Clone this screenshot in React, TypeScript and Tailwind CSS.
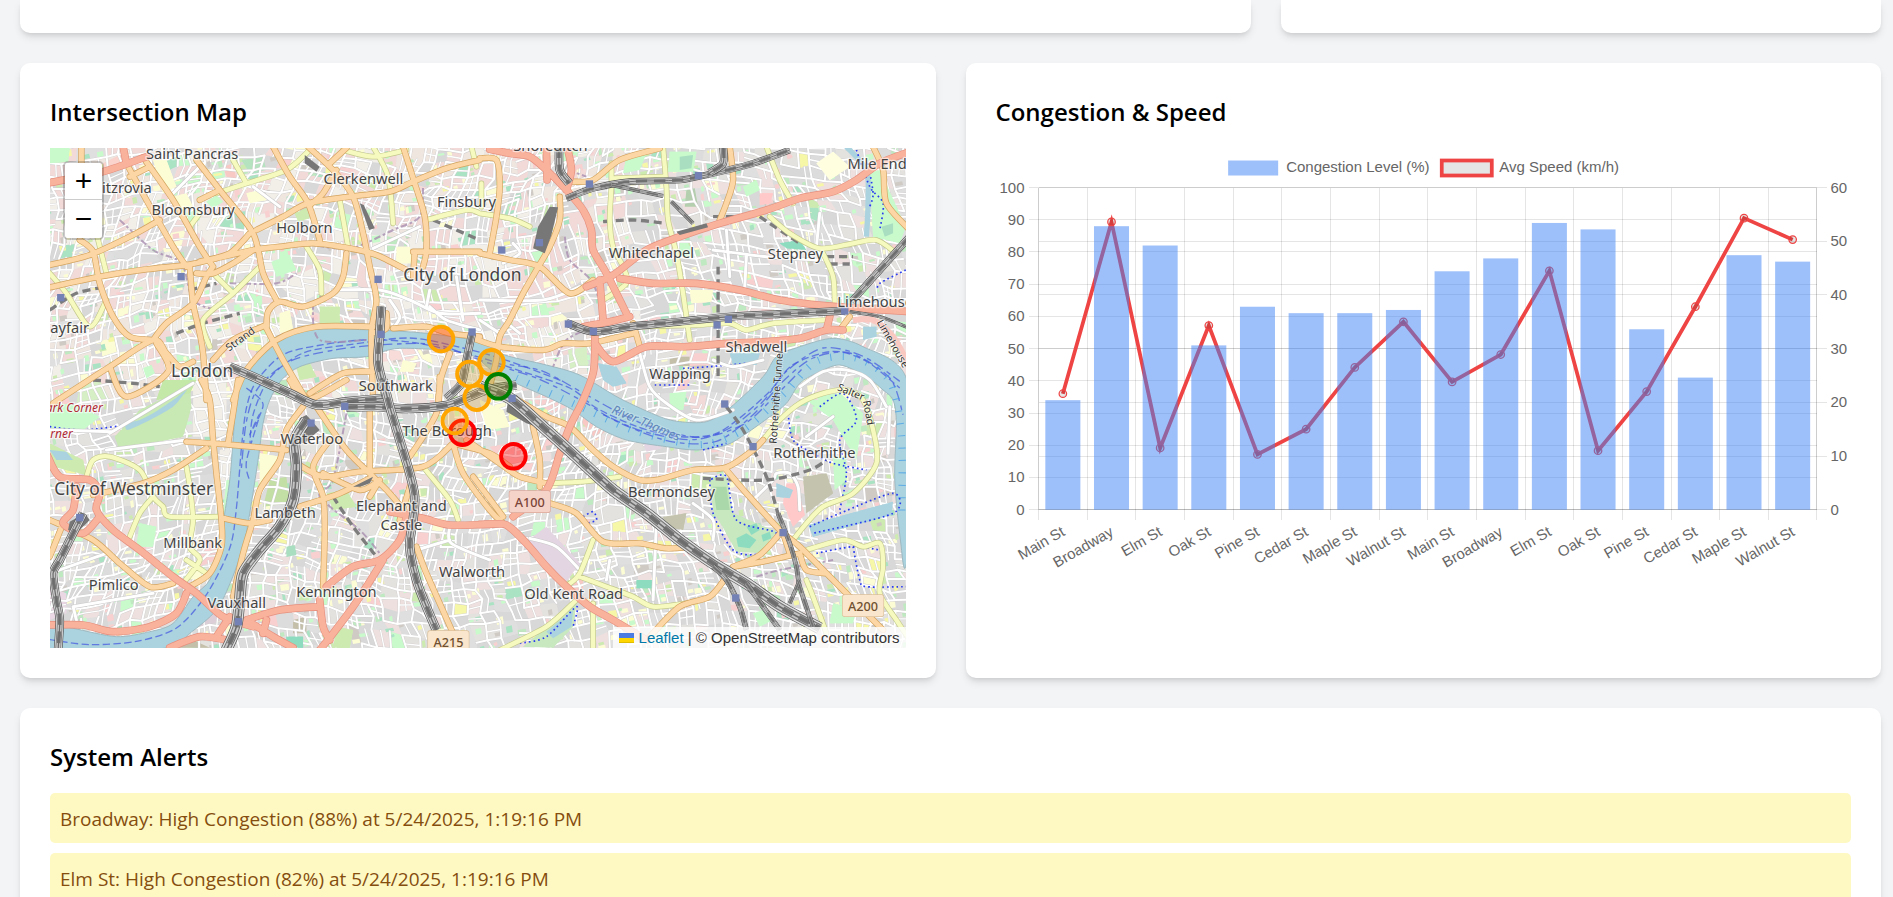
import { ReactNode } from "react";

/* ---------- Map geometry ---------- */

type Tile = 0 | 1 | 2 | 3;
type Line = [Tile, string, number?];

// Origin of each map sector inside the 2568 x 1500 drawing.
const ORIGIN: [number, number][] = [
  [-150, -444],
  [1290, -84],
  [-30, 696],
  [1290, 696],
];

const toPoints = (s: string) => s.split(" ").map((p) => p.split(",").map(Number));

const smooth = (s: string, tile?: Tile, closed = false) => {
  const [ox, oy] = tile === undefined ? [0, 0] : ORIGIN[tile];
  const p = toPoints(s).map(([x, y]) => [x + ox, y + oy]);
  const n = p.length;
  const at = (i: number) => (closed ? p[(i + n) % n] : p[Math.max(0, Math.min(n - 1, i))]);
  let d = `M${p[0][0]},${p[0][1]}`;
  for (let i = 0; i < (closed ? n : n - 1); i++) {
    const [a, b, c, e] = [at(i - 1), at(i), at(i + 1), at(i + 2)];
    const f = (v: number) => Math.round(v * 10) / 10;
    d += `C${f(b[0] + (c[0] - a[0]) / 7)},${f(b[1] + (c[1] - a[1]) / 7)} ${f(c[0] - (e[0] - b[0]) / 7)},${f(c[1] - (e[1] - b[1]) / 7)} ${c[0]},${c[1]}`;
  }
  return closed ? d + "Z" : d;
};

const polygon = (s: string, t: Tile) =>
  `M${toPoints(s).map(([x, y]) => `${x + ORIGIN[t][0]},${y + ORIGIN[t][1]}`).join("L")}Z`;

const RIVER =
  "0,1431 70,1441 200,1466 300,1451 370,1426 430,1346 480,1296 510,1196 520,1126 540,996 550,876 560,756 585,686 620,636 680,566 800,544 970,546 1130,556 1290,581 1365,621 1490,651 1590,681 1710,751 1830,806 1890,821 1970,821 2040,780 2140,686 2180,626 2250,596 2350,571 2440,596 2568,686 2600,1000 2568,1256 2552,1176 2535,996 2540,826 2530,756 2500,726 2450,686 2370,651 2300,676 2250,706 2210,766 2160,806 2090,856 2030,891 1940,906 1850,896 1730,876 1640,836 1570,786 1490,746 1410,711 1330,670 1250,616 1050,601 950,626 850,631 750,656 695,696 660,756 640,826 625,936 595,1126 580,1196 545,1296 500,1386 420,1456 350,1500 0,1510";

const FERRIES = [
  "0,1475 120,1490 260,1480 380,1440 470,1340 540,1200 560,1080 575,900 590,780 620,700 700,620 820,590 960,575 1100,585 1280,625 1400,665 1560,720 1640,780 1760,835 1880,865 1990,860 2070,810 2160,730 2230,650 2350,610 2450,640 2550,720",
  "575,960 590,820 625,720 720,640 860,605 1000,590 1160,590 1300,640 1460,690 1600,760 1700,820 1860,880 2000,880 2110,800 2200,700 2290,630 2400,615 2520,690 2560,800",
  "600,900 610,800 660,690 760,615 900,590 1080,570 1240,600 1380,640 1540,700",
  "1660,800 1780,850 1930,875 2040,840 2140,760 2210,670 2320,600 2440,625 2550,700",
  "590,720 640,770 600,860 630,800 590,940 600,1000",
  "1380,650 1480,670 1600,735 1700,790 1800,835 1950,868 2080,830 2170,750 2260,660",
];

const RED: Line[] = [
  [0, "150,548 310,515 440,470"], [0, "370,440 380,490"],
  [1, "30,88 90,100 150,110 200,150 260,210 310,270 335,330 340,390 380,460 445,590"],
  [1, "200,80 202,180"], [1, "262,80 275,150 260,210"],
  [1, "320,500 400,465 500,390 600,350 720,310 860,270 960,235 1060,215 1130,180 1200,130 1290,95"],
  [1, "420,475 520,490 650,490 780,510 900,540 1070,560 1290,575"],
  [1, "310,620 390,605 450,590"], [1, "360,480 370,600"],
  [1, "345,620 345,700 340,760 310,840 270,920 240,1000 200,1110 100,1190"],
  [1, "345,670 400,725 500,680 620,680 740,670 860,665 960,655 1040,630 1090,630"], [1, "1050,590 1040,630"],
  [2, "20,220 60,290 150,300 180,340 170,390 220,450 300,510 400,590 470,640 550,710 640,740"],
  [2, "110,320 100,390 70,430 130,460 180,410"],
  [2, "20,735 130,735 220,755 330,740 410,700 440,640"],
  [2, "620,720 720,690 840,680"], [2, "390,803 480,770 560,780"], [2, "570,710 530,770"],
  [2, "840,660 850,740 870,780"], [2, "860,620 940,560 1020,540 1080,480 1100,410"],
  [2, "1030,540 980,620 940,680 880,760 840,810"], [2, "1050,395 1150,415 1230,435 1350,433 1400,435 1460,490"],
  [2, "620,720 700,770 760,803"], [2, "680,720 670,760"],
  [3, "0,433 80,435 140,490 200,560 260,620 330,680 400,720 500,780"],
];

const ORANGE: Line[] = [
  [0, "245,440 245,490"], [0, "150,795 270,765 400,705 480,660"],
  [0, "150,862 300,830 440,808 560,795 650,775 760,750 840,740 940,730 1050,745 1130,765 1220,810"],
  [0, "430,472 520,600 600,740 640,800"], [0, "380,490 440,600 520,740 560,800"],
  [0, "590,480 660,570 760,700 790,820 830,900"], [0, "820,440 870,530 925,610 960,720"],
  [0, "770,690 850,650 925,610 1050,590 1170,575 1240,545 1340,505 1440,480"],
  [0, "925,440 1000,510 1060,590 1090,700 1110,800 1130,900 1115,1000 1120,1200"],
  [0, "1210,440 1245,550 1275,650 1280,750 1270,800"], [0, "1240,755 1440,755"], [0, "1245,755 1240,830"],
  [0, "1040,760 1030,830 1000,880 910,920 840,905 805,935 800,985"],
  [0, "240,720 280,755 300,850 340,950 390,1010 460,1020"],
  [0, "460,1020 500,970 580,910 620,830 640,800"],
  [0, "570,800 580,910 600,1000 610,1060 620,1200"], [0, "640,1080 700,1020 800,975"],
  [0, "160,1210 330,1100 460,1020 500,1060 540,1100 580,1085"],
  [0, "470,1030 505,1115 380,1190 330,1100"],
  [0, "700,1200 740,1110 830,1020 950,980 1120,980"], [0, "1115,1000 1160,985 1160,940"],
  [0, "1180,985 1280,980 1350,1000 1440,1010"],
  [0, "800,985 850,1080 920,1200"], [0, "930,1180 1030,1120 1120,1115"], [0, "1350,1060 1325,1130 1315,1200"],
  [0, "750,700 690,760 600,785"], [0, "760,750 700,790 640,820 590,820"], [0, "660,570 600,600"],
  [0, "990,490 1040,444"], [0, "450,500 390,530"], [0, "1010,510 970,580 930,615"],
  [1, "0,115 50,120 60,200 50,290 30,400"], [1, "0,400 90,420 180,440 270,520 340,480"],
  [1, "240,230 240,300 210,380 170,450 130,520 90,600 60,650 50,720 30,800"],
  [1, "280,185 340,180 420,120 540,85"], [1, "750,80 760,180 740,250 720,300"],
  [1, "1180,80 1210,150 1220,250 1290,330"], [1, "-20,655 60,680 190,690 250,670 330,670 460,640"],
  [1, "460,610 480,680"], [1, "1110,590 1080,630"],
  [2, "485,0 510,60 520,180 530,280 545,420 545,500 510,580 450,620"], [2, "595,0 580,100 565,190"],
  [2, "440,185 580,195 740,210"], [2, "790,80 740,150 720,240 660,330 640,420 610,520 580,650"],
  [2, "550,415 630,430 690,420"], [2, "160,345 310,310 400,270 500,205"], [2, "750,0 800,60 920,0"],
  [2, "830,80 920,210 1000,290 1050,340 1100,400"], [2, "870,180 820,260 850,350 855,450 850,620"],
  [2, "770,250 850,290 960,275 1150,260 1240,190"], [2, "780,380 900,340 1000,290"], [2, "990,90 990,280"],
  [2, "1110,320 1080,420"], [2, "1020,300 990,350"], [2, "1200,-10 1190,100 1110,230"],
  [2, "1240,190 1270,280 1350,390 1390,430"], [2, "1240,190 1350,220 1410,260"],
  [2, "1130,500 1160,580 1240,760"], [2, "30,420 160,480 240,550 330,620 400,610"], [2, "30,530 70,430"],
  [2, "850,280 960,330 1020,300"],
  [3, "60,30 130,70 200,110 270,140 340,210 400,260 480,300 540,298 640,270 740,262 820,210 850,180"],
  [3, "160,140 180,240 180,320"], [3, "-40,180 60,250 120,290 200,310"], [3, "-20,290 70,410"],
  [3, "210,370 290,400 370,485 480,490 560,505 640,500"],
  [3, "740,270 800,340 900,450 960,500 1040,580 1110,650 1210,750"],
  [3, "910,450 840,525 760,560"], [3, "760,560 850,545 960,520"], [3, "740,590 690,650 600,680 510,770"],
  [3, "910,460 930,520"], [3, "960,520 980,570 1040,580"],
];

const YELLOW: Line[] = [
  [0, "650,580 740,550 860,510 930,450"], [0, "700,480 740,550"], [0, "290,700 320,820"],
  [0, "150,820 200,880 270,980 320,900"], [0, "780,800 700,880 610,960 630,1040"], [0, "640,820 700,880"],
  [0, "1020,600 1045,740"], [0, "1120,440 1165,530 1180,670"], [0, "1030,450 1120,470 1220,450"],
  [0, "1280,660 1400,630 1440,640"], [0, "920,740 960,810 965,880"], [0, "1415,440 1430,500"],
  [0, "600,640 570,680"],
  [1, "395,130 395,200 390,300 400,380 430,440 440,490 370,540"], [1, "400,175 550,170"],
  [1, "550,80 560,200 565,300 590,400 610,520 630,660"], [1, "0,280 90,295 150,320"], [1, "5,190 5,260"],
  [1, "860,80 900,180 940,250"], [1, "870,290 930,340 1020,385 1120,370 1190,360 1250,400"],
  [1, "1030,400 1060,470 1065,550"], [1, "470,620 650,615 750,610 800,630 880,610 1040,600"],
  [2, "140,290 160,240 210,230 300,270 340,350 370,380 390,410 540,410"], [2, "340,350 300,400 270,470"],
  [2, "440,260 450,320 460,420 450,500 480,540 430,610"], [2, "1150,260 1230,360 1255,420"], [2, "440,540 500,580"],
  [3, "200,310 310,305 420,290"], [3, "340,480 300,580 265,615"],
  [3, "300,590 380,620 460,650 520,680 620,670"], [3, "60,810 200,740 290,660"], [3, "340,670 340,810"],
  [3, "850,180 900,120 960,70 1030,40 1100,30 1150,60 1180,150 1190,250 1120,340 1030,380 980,430 940,480"],
  [3, "980,510 1090,480 1150,500 1200,490 1210,560 1200,640 1250,720 1290,780"],
  [3, "980,600 1000,650 1040,760"],
];

const WHITE: Line[] = [
  [2, "200,210 440,180"], [2, "210,160 460,10"], [2, "30,150 215,155"], [2, "30,580 200,520"], [2, "100,680 340,640"],
  [2, "100,680 110,720"], [0, "1000,870 1140,870 1230,900 1320,940 1440,940"], [0, "1290,870 1280,920"],
  [0, "1260,680 1120,745"], [0, "600,500 520,580"], [1, "0,540 190,540 300,500"], [1, "70,600 120,640"],
  [1, "700,390 860,410 1020,420"], [1, "740,330 750,470"], [1, "800,410 795,500"],
  [1, "480,700 510,800 560,850 650,900 760,870"], [1, "700,720 760,740 850,720"],
  [1, "960,800 1030,755 1100,750 1170,780 1220,860"], [1, "1020,280 1010,380"],
  [3, "820,360 880,300 890,280 930,280 955,320 960,390"], [3, "1230,80 1225,220"], [3, "150,475 230,500 300,570"],
  [3, "640,370 700,420 700,480"], [3, "530,430 520,660"], [3, "390,540 380,600"], [2, "1230,440 1235,490 1350,540"],
  [2, "1130,510 1230,480"], [3, "980,170 1060,110"],
  [0, "1290,920 1340,960 1440,990"], [0, "1370,830 1390,960"], [0, "1170,900 1200,950 1180,985"],
  [1, "100,370 120,400 70,430"], [1, "0,600 60,640"], [0, "840,620 760,560"],
];

const RAIL: Line[] = [
  [0, "690,1100 760,1130 870,1180 950,1215 1040,1205 1150,1195", 28],
  [0, "1145,920 1140,1000 1135,1090 1160,1190", 28],
  [0, "1417,1000 1400,1080 1385,1150 1340,1195", 24],
  [1, "238,80 240,150 268,190", 26],
  [1, "260,235 340,205 450,185 600,180 700,160 820,130 930,90", 20],
  [1, "730,80 730,130 690,158", 24], [1, "395,195 550,228", 12], [1, "575,245 640,310", 12],
  [1, "260,608 340,635 450,620 600,605 750,590 900,582 1095,572", 24],
  [1, "1290,350 1200,450 1115,545", 22], [1, "1110,575 1200,590 1290,625", 10],
  [2, "920,82 1000,80 1100,86 1220,76 1290,50 1340,30 1430,15", 28],
  [2, "1030,0 1050,80 1080,180 1110,280 1125,350 1120,420 1110,500 1130,600 1160,680 1190,750", 28],
  [2, "800,120 765,180 770,260 760,360 720,440 660,510 610,580 600,660 590,740 560,810", 34],
  [2, "130,400 100,460 60,540 40,580 50,660 60,720 55,810", 26],
  [3, "0,20 90,55 200,150 300,240 400,330 500,400 600,480 700,550 800,610 900,680 1020,745", 36],
  [3, "700,560 740,600 780,680 800,750", 16], [3, "800,610 850,680 900,750", 16],
  [3, "895,400 930,490 950,560 960,620 1000,740", 14], [3, "960,600 930,670", 12],
];

const TUNNELS: Line[] = [
  [1, "370,305 460,300 560,310"], [1, "700,290 770,290"], [1, "715,440 715,780"], [1, "840,290 960,370"],
  [1, "1040,410 1120,410"], [1, "1050,432 1110,432"], [3, "740,80 790,150 860,290 900,420"],
  [3, "670,295 860,300 990,270 1040,240"], [2, "880,350 940,440 1010,530"], [0, "150,930 230,880 320,860"],
  [0, "530,1000 610,970 720,940"], [0, "1300,660 1440,720"], [0, "280,1140 400,1150 480,1160"], [0, "570,870 650,850"],
];

const STATIONS: [Tile, number, number][] = [
  [0, 544, 830], [0, 183, 893], [0, 1135, 838], [0, 1144, 1003], [0, 1417, 996],
  [1, 329, 192], [1, 656, 167], [1, 179, 368], [1, 66, 390], [1, 266, 612], [1, 341, 634], [1, 712, 615],
  [1, 746, 598], [1, 1095, 573], [1, 735, 852], [2, 120, 413], [2, 814, 129], [2, 915, 79], [2, 596, 725],
  [3, 97, 55], [3, 820, 200], [3, 910, 458], [3, 768, 654],
];

const AREAS: [Tile, string, string][] = [
  [0, "#c8facc", "150,444 210,444 205,485 150,490"], [0, "#f9d3cc", "310,490 370,460 365,500 310,525"],
  [0, "#fdfdd5", "460,480 500,480 530,560 490,580"], [0, "#c8facc", "620,605 650,585 670,605 640,625"],
  [0, "#f2efe9", "590,690 630,660 665,690 625,730"], [0, "#b5e3c0", "725,480 790,470 800,510 750,520"],
  [0, "#c8facc", "815,785 870,765 890,810 830,830"], [0, "#cdebb0", "885,640 920,625 930,655 895,665"],
  [0, "#f2efe9", "830,850 950,800 980,870 900,910"], [0, "#cdebb0", "960,920 1020,920 1020,970 960,970"],
  [0, "#c8facc", "430,1105 455,1095 465,1120 440,1135"], [0, "#dddddd", "340,760 430,715 480,780 360,810"],
  [0, "#d6efc4", "240,1160 300,1140 330,1200 230,1210"], [0, "#cdebb0", "890,1100 930,1090 950,1130 900,1140"],
  [0, "#fdfdd5", "1190,740 1230,740 1240,790 1190,790"], [0, "#f8dcda", "1150,1040 1260,1045 1240,1075 1110,1090"],
  [0, "#fdfdd5", "1210,1080 1250,1090 1240,1115 1200,1115"], [0, "#f7c8c4", "670,500 700,490 710,540 685,540"],
  [0, "#fdfdd5", "840,940 870,930 880,990 840,1000"], [0, "#c8facc", "560,640 590,630 600,660 570,670"],
  [0, "#fdfdd5", "520,590 560,580 580,620 540,630"], [0, "#fdfdd5", "740,580 780,570 800,600 750,610"],
  [1, "#c8facc", "570,95 650,95 640,155 565,155"], [1, "#a9dfc0", "600,110 640,105 635,145 600,150"],
  [1, "#ffffe0", "1010,130 1060,95 1110,140 1050,180"], [1, "#b3cfae", "620,210 645,205 655,260 615,260"],
  [1, "#ffc9c9", "840,220 880,220 870,250 840,255"], [1, "#c8facc", "1170,160 1200,150 1278,320 1260,370 1180,350"],
  [1, "#a9dfc0", "1205,320 1240,310 1240,340 1215,350"], [1, "#fdfdd5", "630,510 700,510 695,545 635,550"],
  [1, "#d6efc4", "265,690 320,680 325,740 270,745"], [1, "#c4bfa8", "570,710 630,710 630,738 570,738"],
  [1, "#f7d0cf", "630,700 690,700 690,735 630,738"], [1, "#aad3df", "750,700 840,700 830,735 760,735"],
  [1, "#aad3df", "355,730 410,740 440,790 400,800 370,780"], [1, "#c8facc", "570,820 620,815 610,870 570,870"],
  [1, "#8edcc0", "900,370 960,360 980,390 920,385"], [1, "#c8facc", "1010,830 1080,820 1150,880 1130,1020 1060,900"],
  [1, "#aad3df", "1150,620 1190,620 1190,650 1150,660"], [1, "#f2dad9", "620,830 680,825 670,890 640,880"],
  [1, "#c8facc", "440,110 500,100 480,150 430,160"], [1, "#c8facc", "790,200 830,180 840,210 800,230"],
  [2, "#c8e8b4", "225,170 300,90 450,15 455,80 430,170 240,210"], [2, "#c8facc", "30,70 110,75 180,110 130,150 30,145"],
  [2, "#cdebb0", "30,190 130,240 140,285 40,260"], [2, "#aad3df", "30,210 80,215 100,240 50,240"],
  [2, "#c4e8a8", "370,0 470,0 450,40 350,60"], [2, "#f2efe9", "540,210 580,200 570,320 540,320"],
  [2, "#fdfdd5", "660,220 720,230 700,290 660,310"], [2, "#c3dfa5", "690,300 740,290 750,370 670,380"],
  [2, "#c8facc", "300,430 350,440 340,500 290,500"], [2, "#f7cfcf", "490,480 530,480 530,540 480,560"],
  [2, "#fdfdd5", "450,560 490,570 480,600 440,595"], [2, "#c4bfa8", "760,720 800,710 800,760 760,760"],
  [2, "#8edcc0", "740,770 790,770 790,803 740,803"], [2, "#cdebb0", "860,340 920,330 950,380 880,390"],
  [2, "#f2efe9", "460,0 560,0 560,170 460,170"], [2, "#ead8e4", "30,620 80,640 80,700 30,720"],
  [2, "#cdebb0", "890,740 940,750 930,803 880,803"], [2, "#c4bfa8", "390,803 460,780 510,803"],
  [2, "#dccfd8", "450,700 520,690 545,720 490,745"],
  [2, "#c8facc", "560,300 580,300 575,400 550,400"], [2, "#a9dfc0", "740,500 765,495 770,525 740,530"],
  [3, "#c8e8c0", "690,290 740,290 760,400 890,455 840,520 770,515 700,390"], [3, "#aad8aa", "700,320 740,320 750,390 710,390"],
  [3, "#8edcc0", "770,475 800,460 830,480 810,505 775,500"], [3, "#8edcc0", "800,440 830,430 840,450 815,465"],
  [3, "#8edcc0", "845,465 870,455 875,475 850,485"],
  [3, "#c4c4ae", "970,290 1040,280 1060,340 980,400"], [3, "#c4c4ae", "550,410 620,400 610,450 560,440"],
  [3, "#ffc9c9", "920,310 950,310 975,405 940,440 910,370"], [3, "#aad3df", "890,310 940,330 930,355 890,350"],
  [3, "#aad3df", "985,435 1240,365 1235,405 1000,470"], [3, "#e4d5e2", "140,485 200,440 300,550 260,605"],
  [3, "#c8e8c0", "130,800 290,670 280,740 220,803"], [3, "#aad3df", "200,755 280,690 275,740 220,775"],
  [3, "#c8facc", "1060,670 1130,690 1120,730 1050,730"], [3, "#c8facc", "820,700 850,690 880,720 840,740"],
  [3, "#c8facc", "980,60 1100,60 1130,180 1060,120"], [3, "#e4d5e2", "490,185 540,180 545,205 500,215"],
  [3, "#f7c8c4", "300,120 350,90 390,140 350,180"], [3, "#f7d0cf", "30,200 140,180 170,280 60,240"],
  [3, "#fdfdd5", "0,60 70,90 90,140 20,150"], [3, "#c8facc", "1060,230 1100,230 1100,300 1065,330"],
  [3, "#f7c8c4", "280,600 310,590 310,630 280,640"], [3, "#8edcc0", "470,600 520,600 515,625 470,625"],
  [3, "#f7d0cf", "150,60 210,30 260,80 220,100"],
];

// Open areas that no side street crosses.
const OPEN = ["#c8facc", "#c8e8b4", "#c8e8c0", "#aad3df", "#c4c4ae", "#c4e8a8", "#8edcc0", "#e4d5e2", "#ffffe0", "#fdfdd5", "#a9dfc0", "#aad8aa", "#cdebb0", "#ffc9c9"];

const RAIL_YARDS: [Tile, string][] = [
  [1, "210,260 235,262 215,345 195,400 160,385 175,320"], [0, "1080,610 1092,615 1125,685 1108,690"],
  [0, "915,465 960,500 950,515 915,490"], [3, "85,60 110,45 160,90 200,150 140,130 80,95"],
  [1, "590,335 680,310 685,322 600,345"], [2, "90,425 135,400 150,420 110,460 85,450"],
  [2, "780,115 800,105 840,150 815,170 795,190 765,185"], [2, "940,320 1000,290 990,310 960,320"],
];

type Label = { t: Tile; x: number; y: number; text: string; big?: boolean };

const LABELS: Label[] = [
  { t: 0, x: 577, y: 477, text: "Saint Pancras" }, { t: 0, x: 1091, y: 553, text: "Clerkenwell" },
  { t: 0, x: 370, y: 580, text: "Fitzrovia" }, { t: 0, x: 580, y: 646, text: "Bloomsbury" },
  { t: 0, x: 914, y: 700, text: "Holborn" }, { t: 0, x: 1388, y: 842, text: "City of London", big: true },
  { t: 0, x: 190, y: 998, text: "Mayfair" }, { t: 0, x: 607, y: 1130, text: "London", big: true },
  { t: 0, x: 1188, y: 1172, text: "Southwark" }, { t: 0, x: 1400, y: 622, text: "Finsbury" },
  { t: 1, x: 212, y: 92, text: "Shoreditch" }, { t: 1, x: 1192, y: 146, text: "Mile End" },
  { t: 1, x: 515, y: 413, text: "Whitechapel" }, { t: 1, x: 947, y: 416, text: "Stepney" },
  { t: 1, x: 1186, y: 560, text: "Limehouse" }, { t: 1, x: 830, y: 697, text: "Shadwell" },
  { t: 1, x: 601, y: 777, text: "Wapping" }, { t: 2, x: 816, y: 193, text: "Waterloo" },
  { t: 2, x: 282, y: 344, text: "City of Westminster", big: true }, { t: 2, x: 1222, y: 168, text: "The Borough" },
  { t: 2, x: 736, y: 415, text: "Lambeth" }, { t: 2, x: 1085, y: 393, text: "Elephant and" },
  { t: 2, x: 1085, y: 451, text: "Castle" }, { t: 2, x: 459, y: 505, text: "Millbank" },
  { t: 2, x: 222, y: 629, text: "Pimlico" }, { t: 2, x: 591, y: 684, text: "Vauxhall" },
  { t: 2, x: 890, y: 652, text: "Kennington" }, { t: 2, x: 1297, y: 592, text: "Walworth" },
  { t: 3, x: 575, y: 352, text: "Bermondsey" }, { t: 3, x: 1004, y: 235, text: "Rotherhithe" },
  { t: 3, x: 282, y: 657, text: "Old Kent Road" },
];

const MARKERS = [
  { x: 1281, y: 749, color: "#ffa500", fill: "#c9a040", tint: 0.3 },
  { x: 1238, y: 854, color: "#ff0000", fill: "#ff3010", tint: 0.35 },
  { x: 1215, y: 819, color: "#ffa500", fill: "#ffa500", tint: 0.25 },
  { x: 1174, y: 573, color: "#ffa500", fill: "#ff4500", tint: 0.4 },
  { x: 1325, y: 643, color: "#ffa500", fill: "#c9a040", tint: 0.4 },
  { x: 1259, y: 678, color: "#ffa500", fill: "#c9a040", tint: 0.35 },
  { x: 1346, y: 715, color: "#008000", fill: "#808000", tint: 0.3 },
  { x: 1391, y: 925, color: "#ff0000", fill: "#ff0000", tint: 0.38 },
];

/* Side streets and building blocks, laid out on a warped grid. */
const buildStreets = () => {
  let seed = 41;
  const rnd = () => {
    seed = (seed * 1664525 + 1013904223) % 4294967296;
    return seed / 4294967296;
  };
  const cols = 70;
  const rows = 46;
  const grid: [number, number][][] = [];
  for (let j = 0; j <= rows; j++) {
    grid.push([]);
    for (let i = 0; i <= cols; i++) {
      grid[j].push([
        Math.round(i * 40 - 120 + 50 * Math.sin(j * 0.24 + i * 0.07) + rnd() * 18),
        Math.round(j * 37 - 90 + 46 * Math.sin(i * 0.19 + 1.4) + 12 * Math.sin(j * 0.6) + rnd() * 18),
      ]);
    }
  }
  const blocks: Record<string, string> = {};
  const patches: Record<string, string> = {};
  let lanes = "";
  let alleys = "";
  const warm = ["#f2dad9", "#f2dad9", "#f2efe9", "#efe6e0", "#e0dfdf", "#d9d8d8"];
  const cool = ["#e0dfdf", "#d9d8d8", "#dcdcdc", "#e4e2de", "#d9d8d8", "#eee0de"];
  const dots = ["#fdfdd5", "#f7f7a8", "#c8facc", "#cdebb0", "#f7d0cf", "#a9e3c4", "#fdfdd5", "#cfcac4", "#c8facc", "#bfe9c0"];
  const add = (to: Record<string, string>, color: string, d: string) => (to[color] = (to[color] ?? "") + d);
  for (let j = 0; j < rows; j++) {
    for (let i = 0; i < cols; i++) {
      const [a, b, c, d] = [grid[j][i], grid[j][i + 1], grid[j + 1][i + 1], grid[j + 1][i]];
      const isWarm = a[1] < 720 && a[0] < 1720;
      const palette = isWarm ? warm : cool;
      const accent = rnd() < 0.07 ? dots[Math.floor(rnd() * dots.length)] : undefined;
      add(blocks, accent ?? palette[Math.floor(rnd() * palette.length)], `M${a}L${b}L${c}L${d}Z`);
      const count = Math.floor(rnd() * 2.4);
      for (let k = 0; k < count; k++) {
        const x = Math.round(a[0] + rnd() * 30);
        const y = Math.round(a[1] + rnd() * 30);
        const w = Math.round(8 + rnd() * 18);
        const h = Math.round(6 + rnd() * 16);
        add(patches, dots[Math.floor(rnd() * dots.length)], `M${x},${y}l${w},${-4}l3,${h}l${-w},4Z`);
      }
      if (rnd() < 0.76) lanes += `M${a}L${b}`;
      if (rnd() < 0.76) lanes += `M${a}L${d}`;
      if (rnd() < 0.36) {
        const m = [(a[0] + b[0]) / 2, (a[1] + b[1]) / 2];
        const n = [(d[0] + c[0]) / 2, (d[1] + c[1]) / 2];
        alleys += `M${m}L${n}`;
      }
      if (rnd() < 0.22) {
        const m = [(a[0] + d[0]) / 2, (a[1] + d[1]) / 2];
        const n = [(b[0] + c[0]) / 2, (b[1] + c[1]) / 2];
        alleys += `M${m}L${n}`;
      }
    }
  }
  return { blocks, patches, lanes, alleys };
};

const STREETS = buildStreets();

const Roads = ({ lines, casing, fill, width }: { lines: Line[]; casing: string; fill: string; width: number }) => (
  <g fill="none" strokeLinecap="round" strokeLinejoin="round">
    <path d={lines.map(([t, s]) => smooth(s, t)).join("")} stroke={casing} strokeWidth={width + 4} />
    <path d={lines.map(([t, s]) => smooth(s, t)).join("")} stroke={fill} strokeWidth={width} />
  </g>
);

const Shield = ({ x, y, text, fill, stroke, color }: { x: number; y: number; text: string; fill: string; stroke: string; color: string }) => (
  <g>
    <rect x={x - 61} y={y - 33} width="122" height="64" rx="6" fill={fill} stroke={stroke} strokeWidth="4" strokeOpacity="1" />
    <text x={x} y={y + 14} textAnchor="middle" fontSize="38" fontWeight="500" fill={color} stroke="none">{text}</text>
  </g>
);

const CityMap = () => (
  <svg viewBox="0 0 2568 1500" preserveAspectRatio="xMidYMid slice" className="block h-full w-full" role="img" aria-label="Street map of central London">
    <rect width="2568" height="1500" fill="#e0dfdf" />
    {Object.entries(STREETS.blocks).map(([color, d]) => (
      <path key={color} d={d} fill={color} />
    ))}
    {Object.entries(STREETS.patches).map(([color, d]) => (
      <path key={color} d={d} fill={color} />
    ))}
    {AREAS.map(([t, color, s]) => (
      <path key={t + s} d={polygon(s, t)} fill={color} />
    ))}
    <g fill="none" strokeLinecap="round">
      <path d={STREETS.lanes} stroke="#cbc9c9" strokeWidth="8" />
      <path d={STREETS.alleys} stroke="#d0cece" strokeWidth="6" />
      <path d={STREETS.alleys} stroke="#fff" strokeWidth="4" />
      <path d={STREETS.lanes} stroke="#fff" strokeWidth="6" />
    </g>
    {AREAS.filter(([, color]) => OPEN.includes(color)).map(([t, color, s]) => (
      <path key={t + s} d={polygon(s, t)} fill={color} />
    ))}
    <path d={smooth("260,130 300,120 340,100 400,60 440,30 430,45 400,80 340,115 300,135 262,150", 2, true)} fill="#aad3df" />
    <path d={smooth(RIVER, undefined, true)} fill="#aad3df" stroke="#9fb9c0" strokeWidth="3" />
    <path d={smooth("1100,80 1160,150 1165,250 1160,350", 1)} fill="none" stroke="#aad3df" strokeWidth="16" />
    <path d={smooth("1120,600 1180,600 1240,650 1290,740", 1)} fill="none" stroke="#f9c8c0" strokeWidth="18" />
    <g fill="none" stroke="#4254e0" strokeOpacity="0.7" strokeWidth="4">
      {FERRIES.map((s, i) => (
        <path key={s} d={smooth(s)} strokeDasharray={i % 2 ? "14 12 30 14" : "22 10"} />
      ))}
    </g>
    <path
      d={smooth("1400,690 1600,780 1760,850 1950,890 2080,845 2200,740 2300,640 2420,630 2520,700 2555,860 2556,1100")}
      fill="none" stroke="#3f9be8" strokeWidth="22" strokeDasharray="3 34" strokeOpacity="0.7"
    />
    <g fill="none" stroke="#2a3cf0" strokeWidth="5" strokeDasharray="5 9">
      <path d={smooth("690,300 700,400 760,510 840,520 890,460 770,420 740,290 690,300", 3)} />
      <path d={smooth("925,100 940,180 1000,220 1060,250 1160,270", 3)} />
      <path d={smooth("990,440 1080,400 1240,340 1240,400 1000,460", 3)} />
      <path d={smooth("1020,80 1090,40 1130,120 1080,180 1100,280 1080,390", 3)} />
      <path d={smooth("120,790 200,770 290,680 280,740", 3)} />
      <path d={smooth("310,410 340,395 350,420 320,430", 3)} />
      <path d={smooth("1120,500 1140,600 1160,620 1280,620", 3)} />
      <path d={smooth("1010,520 1120,500 1200,510", 3)} />
      <path d={smooth("1130,90 1170,200 1210,250 1200,330", 1)} />
      <path d={smooth("1165,130 1180,220 1170,260", 1)} />
      <path d={smooth("610,745 690,740 800,730", 1)} />
      <path d={smooth("525,795 630,795", 1)} />
      <path d={smooth("1278,450 1200,490 1195,510", 1)} />
      <path d={smooth("30,140 130,150 260,135", 2)} />
      <path d={smooth("670,210 740,190", 3)} />
    </g>
    <g fill="none" stroke="#a98fb0" strokeOpacity="0.8" strokeWidth="6" strokeDasharray="20 8 8 8">
      <path d={smooth("360,660 460,750 545,790 580,900 650,930", 0)} />
      <path d={smooth("910,730 1050,745 1180,690 1260,650 1270,560", 0)} />
      <path d={smooth("930,750 970,870 940,920 960,1020 1100,1020", 0)} />
      <path d={smooth("690,850 830,850 890,820", 0)} />
      <path d={smooth("255,350 270,420 340,490 360,600 260,660 220,740", 1)} />
      <path d={smooth("265,150 320,170", 1)} />
      <path d={smooth("270,90 265,190", 1)} />
      <path d={smooth("920,100 880,300 840,350 960,450 1020,520", 2)} />
      <path d={smooth("830,590 900,570 1060,540", 3)} />
    </g>
    <path d={WHITE.map(([t, s]) => smooth(s, t)).join("")} fill="none" stroke="#c8c8c8" strokeWidth="12" strokeLinecap="round" />
    <path d={WHITE.map(([t, s]) => smooth(s, t)).join("")} fill="none" stroke="#fff" strokeWidth="9" strokeLinecap="round" />
    <path d={TUNNELS.map(([t, s]) => smooth(s, t)).join("")} fill="none" stroke="#7d7d7d" strokeWidth="10" strokeDasharray="24 14" />
    <Roads lines={YELLOW} casing="#c3c98c" fill="#f7fabf" width={13} />
    <Roads lines={ORANGE} casing="#d3a45f" fill="#fcd6a4" width={15} />
    <Roads lines={RED} casing="#e6907f" fill="#f9b29c" width={19} />
    {RAIL_YARDS.map(([t, s]) => (
      <path key={s} d={polygon(s, t)} fill="#777" />
    ))}
    <g fill="none">
      {RAIL.map(([t, s, w = 20]) => (
        <g key={s}>
          <path d={smooth(s, t)} stroke="#555" strokeWidth={w} />
          <path d={smooth(s, t)} stroke="#e0e0e0" strokeWidth={w - 4} />
          <path d={smooth(s, t)} stroke="#747474" strokeWidth={w * 0.66} />
          <path d={smooth(s, t)} stroke="#c4c4c4" strokeWidth={w * 0.48} />
          <path d={smooth(s, t)} stroke="#747474" strokeWidth={w * 0.42} strokeDasharray="34 20" />
          <path d={smooth(s, t)} stroke="#6c6c6c" strokeWidth={w * 0.14} />
        </g>
      ))}
    </g>
    <g fill="#7381b4">
      {STATIONS.map(([t, x, y]) => (
        <rect key={`${t}${x}`} x={x + ORIGIN[t][0] - 11} y={y + ORIGIN[t][1] - 11} width="22" height="22" />
      ))}
    </g>
    <g fontFamily="'Noto Sans', sans-serif" fill="#444" stroke="#fff" strokeOpacity="0.6" strokeWidth="8" strokeLinejoin="round" paintOrder="stroke">
      {LABELS.map(({ t, x, y, text, big }) => (
        <text key={text} x={x + ORIGIN[t][0]} y={y + ORIGIN[t][1]} textAnchor="middle" fontSize={big ? 52 : 44}>
          {text}
        </text>
      ))}
      <g fill="#333" fontSize="32" textAnchor="middle" strokeWidth="4">
        <text transform="translate(578 582) rotate(-36)">Strand</text>
        <text transform="translate(2190 748) rotate(-86)" fontSize="31">Rotherhithe Tunnel</text>
        <text transform="translate(2400 742) rotate(22)" fontSize="31">Salter</text>
        <text transform="translate(2446 796) rotate(80)" fontSize="31">Road</text>
        <text transform="translate(2520 592) rotate(60)" fontSize="31">Limehouse</text>
      </g>
      <g fill="#b02a35" fontStyle="italic" fontSize="36">
        <text x="-122" y="792">Hyde Park Corner</text>
        <text x="-40" y="870">Corner</text>
      </g>
      <text transform="translate(1684 794) rotate(23)" fontSize="37" fontStyle="italic" fill="#5f86b8" strokeOpacity="0.2">River Thames</text>
      <Shield x={1440} y={1062} text="A100" fill="#f6d3c8" stroke="#dba79a" color="#7a4438" />
      <Shield x={2440} y={1374} text="A200" fill="#fae6cc" stroke="#dcc09a" color="#6f5030" />
      <Shield x={1196} y={1482} text="A215" fill="#fae6cc" stroke="#dcc09a" color="#6f5030" />
    </g>
    {MARKERS.map(({ x, y, color, fill, tint }) => (
      <circle key={`${x}-${y}`} cx={x} cy={y} r="37" fill={fill} fillOpacity={tint} stroke={color} strokeWidth="11.5" />
    ))}
  </svg>
);

/* ---------- Chart ---------- */

const STREET_NAMES = ["Main St", "Broadway", "Elm St", "Oak St", "Pine St", "Cedar St", "Maple St", "Walnut St"];
const CONGESTION = [34, 88, 82, 51, 63, 61, 61, 62, 74, 78, 89, 87, 56, 41, 79, 77];
const SPEED = [21.6, 53.6, 11.5, 34.3, 10.3, 15, 26.5, 35, 23.8, 28.9, 44.5, 11, 22, 37.8, 54.3, 50.3];

const LEFT = 42.5;
const RIGHT = 820.5;
const TOP = 39.5;
const BOTTOM = 361.5;
const STEP = (RIGHT - LEFT) / CONGESTION.length;
const centre = (i: number) => LEFT + STEP * (i + 0.5);
const scaleY = (v: number, max: number) => BOTTOM - (v / max) * (BOTTOM - TOP);

const CongestionChart = () => (
  <svg viewBox="0 0 855 428" className="block h-auto w-full" role="img" aria-label="Congestion level and average speed by street" fontFamily="'Liberation Sans', Arial, sans-serif" fontSize="15" fill="#666">
    <rect x="232" y="12.5" width="50" height="15" fill="#9dc0fa" />
    <text x="290" y="24">Congestion Level (%)</text>
    <rect x="445.5" y="12.5" width="50" height="15" fill="#e5e5e5" stroke="#ef4444" strokeWidth="3.75" />
    <text x="503" y="24">Avg Speed (km/h)</text>
    <g stroke="#000" strokeOpacity="0.1" shapeRendering="crispEdges">
      {Array.from({ length: 11 }, (_, i) => (
        <line key={i} x1={LEFT - 10} x2={RIGHT} y1={scaleY(i * 10, 100)} y2={scaleY(i * 10, 100)} />
      ))}
      {Array.from({ length: 7 }, (_, i) => (
        <line key={i} x1={LEFT} x2={RIGHT + 10} y1={scaleY(i * 10, 60)} y2={scaleY(i * 10, 60)} />
      ))}
      {Array.from({ length: 17 }, (_, i) => (
        <line key={i} x1={LEFT + i * STEP} x2={LEFT + i * STEP} y1={TOP} y2={BOTTOM + 10} />
      ))}
      <path d={`M${LEFT},${TOP}V${BOTTOM}H${RIGHT}V${TOP}`} fill="none" />
    </g>
    <polyline points={SPEED.map((v, i) => `${centre(i)},${scaleY(v, 60)}`).join(" ")} fill="none" stroke="#ef4444" strokeWidth="3.75" strokeMiterlimit="10" />
    {SPEED.map((v, i) => (
      <circle key={i} cx={centre(i)} cy={scaleY(v, 60)} r="3.75" fill="#000" fillOpacity="0.1" stroke="#ef4444" strokeWidth="1.25" />
    ))}
    {CONGESTION.map((v, i) => (
      <rect key={i} x={centre(i) - 17.5} y={scaleY(v, 100)} width="35" height={BOTTOM - scaleY(v, 100)} fill="#3b82f6" fillOpacity="0.5" />
    ))}
    {Array.from({ length: 11 }, (_, i) => (
      <text key={i} x="28.5" y={scaleY(i * 10, 100) + 5} textAnchor="end">{i * 10}</text>
    ))}
    {Array.from({ length: 7 }, (_, i) => (
      <text key={i} x="834" y={scaleY(i * 10, 60) + 5}>{i * 10}</text>
    ))}
    {CONGESTION.map((_, i) => (
      <text key={i} transform={`translate(${centre(i) + 3} ${BOTTOM + 25}) rotate(-30)`} textAnchor="end">
        {STREET_NAMES[i % 8]}
      </text>
    ))}
  </svg>
);

/* ---------- Page ---------- */

const Card = ({ title, children, className = "" }: { title: string; children: ReactNode; className?: string }) => (
  <section className={`rounded-[10px] bg-white p-[30px] shadow-[0_5px_8px_-1px_rgba(0,0,0,0.1),0_3px_5px_-2px_rgba(0,0,0,0.1)] ${className}`}>
    <h2 className="mb-[18px] text-[24px] leading-[37px] font-semibold text-black">{title}</h2>
    {children}
  </section>
);

const ALERTS = [
  { street: "Broadway", level: 88 },
  { street: "Elm St", level: 82 },
];

export default function App() {
  return (
    <main className="flex h-screen flex-col gap-[30px] overflow-hidden bg-[#f3f4f6] pr-3 pl-5 font-['Open_Sans','Noto_Sans',sans-serif]">
      <div className="grid shrink-0 grid-cols-3 gap-[30px]">
        <div className="col-span-2 h-[33px] rounded-b-[10px] bg-white shadow-[0_5px_8px_-1px_rgba(0,0,0,0.1),0_3px_5px_-2px_rgba(0,0,0,0.1)]" />
        <div className="h-[33px] rounded-b-[10px] bg-white shadow-[0_5px_8px_-1px_rgba(0,0,0,0.1),0_3px_5px_-2px_rgba(0,0,0,0.1)]" />
      </div>

      <div className="grid shrink-0 grid-cols-2 gap-[30px]">
        <Card title="Intersection Map">
          <div className="relative h-[500px] overflow-hidden bg-[#e0dfdf] font-['Liberation_Sans',Arial,sans-serif]">
            <CityMap />
            <div className="absolute top-[13px] left-[13px] flex flex-col rounded-[5px] border-2 border-black/20 bg-clip-padding text-[30px] text-black">
              <button type="button" aria-label="Zoom in" className="flex h-[37px] w-[37px] items-center justify-center rounded-t-[3px] border-b border-[#ccc] bg-white leading-none">
                +
              </button>
              <button type="button" aria-label="Zoom out" className="flex h-[38px] w-[37px] items-center justify-center rounded-b-[3px] bg-white leading-none">
                −
              </button>
            </div>
            <div className="absolute right-0 bottom-0 flex h-[21px] items-center bg-white/80 px-[6px] text-[15px] leading-[21px] text-[#333]">
              <a href="#leaflet" className="flex items-center gap-[5px] text-[#0078a8]">
                <svg width="15" height="10" viewBox="0 0 15 10" aria-hidden="true">
                  <path fill="#4c7be1" d="M0 0h15v5H0z" />
                  <path fill="#ffd500" d="M0 5h15v4H0z" />
                  <path fill="#e0bc00" d="M0 9h15v1H0z" />
                </svg>
                Leaflet
              </a>
              <span className="whitespace-pre"> | © OpenStreetMap contributors</span>
            </div>
          </div>
        </Card>

        <Card title="Congestion &amp; Speed">
          <CongestionChart />
        </Card>
      </div>

      <Card title="System Alerts" className="shrink-0">
        <ul className="flex flex-col gap-[10px]">
          {ALERTS.map(({ street, level }) => (
            <li key={street} className="rounded-[5px] bg-[#fef9c3] px-[10px] pt-[11px] pb-[9px] text-[19px] leading-[30px] text-[#854d0e]">
              {street}: High Congestion ({level}%) at 5/24/2025, 1:19:16 PM
            </li>
          ))}
        </ul>
      </Card>
    </main>
  );
}
